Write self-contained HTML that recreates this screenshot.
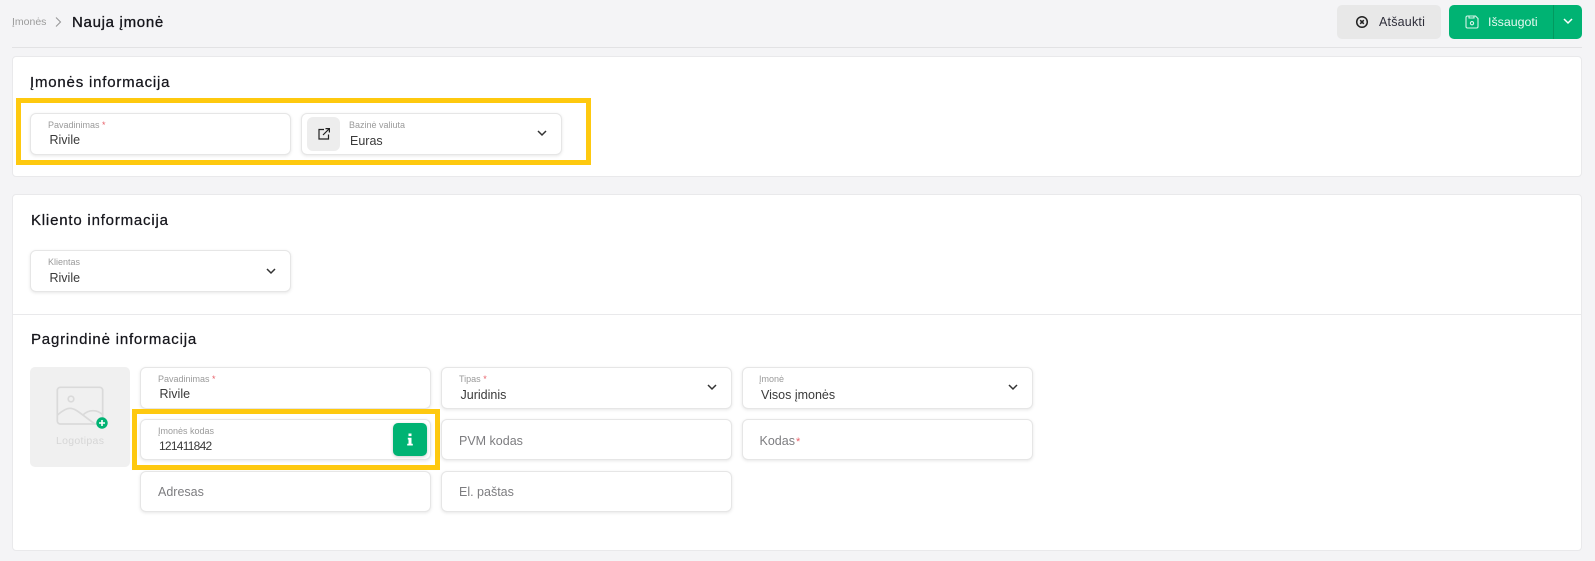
<!DOCTYPE html>
<html lang="lt">
<head>
<meta charset="utf-8">
<title>Nauja įmonė</title>
<style>
html,body{margin:0;padding:0}
body{width:1595px;height:561px;position:relative;overflow:hidden;background:#f4f4f6;font-family:"Liberation Sans",sans-serif;color:#333}
div,span,svg{position:absolute;box-sizing:border-box}
.t{white-space:nowrap;line-height:20px;height:20px}
.card{background:#fff;border:1px solid #e9e9eb;border-radius:4px}
.f{background:#fff;border:1px solid #e6e6e6;border-radius:6px;box-shadow:0 1px 3px rgba(0,0,0,.10);width:291px;height:42px}
.h{font-size:15px;color:#16161c;letter-spacing:.8px;-webkit-text-stroke:.25px #16161c}
.l{font-size:9px;color:#9a9a9a;letter-spacing:0}
.v{font-size:12.5px;color:#3a3a3a}
.p{font-size:12.5px;color:#7d7d80}
.r{color:#e8616a}
.y{border:5px solid #fec90f}
</style>
</head>
<body>
<!-- header -->
<div class="t" style="left:12px;top:12px;font-size:10.5px;color:#9b9b9b">Įmonės</div>
<svg style="left:54px;top:16px" width="9" height="12" viewBox="0 0 9 12" fill="none" stroke="#999" stroke-width="1.100"><path d="M2 1.500L6.500 6L2 10.500"/></svg>
<div class="t" style="left:72px;top:13px;font-size:15px;color:#16161c;letter-spacing:.7px;-webkit-text-stroke:.35px #16161c">Nauja įmonė</div>
<div style="left:12px;top:47px;width:1570px;height:1px;background:#e2e2e4"></div>

<div style="left:1337px;top:5px;width:104px;height:34px;background:#e8e8e8;border-radius:5px"></div>
<svg style="left:1355px;top:15px" width="14" height="14" viewBox="0 0 14 14" fill="none" stroke="#222" stroke-width="1.500"><circle cx="7" cy="7" r="5.300"/><path d="M5.200 5.200L8.800 8.800M8.800 5.200L5.200 8.800"/></svg>
<div class="t" style="left:1379px;top:12px;font-size:12.5px;color:#2e2e3a;letter-spacing:.2px">Atšaukti</div>

<div style="left:1449px;top:5px;width:133px;height:34px;background:#00b373;border-radius:5px"></div>
<div style="left:1553px;top:5px;width:1px;height:34px;background:#02995f"></div>
<svg style="left:1465px;top:15px" width="14" height="14" viewBox="0 0 14 14" fill="none" stroke="#d8f5e9" stroke-width="1.100"><path d="M2.500 1H10.500L13 3.500V11.500A1.500 1.500 0 0 1 11.500 13H2.500A1.500 1.500 0 0 1 1 11.500V2.500A1.500 1.500 0 0 1 2.500 1Z"/><path d="M4 1V3H9V1"/><circle cx="7" cy="8.200" r="1.600"/></svg>
<div class="t" style="left:1488px;top:12px;font-size:12.4px;color:#e6f9f1;letter-spacing:0">Išsaugoti</div>
<svg style="left:1562px;top:17px" width="12" height="8" viewBox="0 0 12 8" fill="none" stroke="#fff" stroke-width="1.500"><path d="M2 2L6 6L10 2"/></svg>

<!-- card 1 -->
<div class="card" style="left:12px;top:56px;width:1570px;height:121px"></div>
<div class="t h" style="left:30px;top:73px">Įmonės informacija</div>
<div class="y" style="left:16px;top:98px;width:575px;height:67px"></div>
<div class="f" style="left:30px;top:113px;width:261px"></div>
<div class="t l" style="left:48px;top:115px">Pavadinimas <span class="r" style="position:static">*</span></div>
<div class="t v" style="left:49.500px;top:130px">Rivile</div>
<div class="f" style="left:301px;top:113px;width:261px"></div>
<div style="left:307px;top:117px;width:33px;height:34px;background:#ededed;border-radius:6px"></div>
<svg style="left:317px;top:127px" width="14" height="14" viewBox="0 0 14 14" fill="none" stroke="#222" stroke-width="1.200"><path d="M7 2.500H2V12H11.500V7.500"/><path d="M6 8L12 2M8.500 1.600H12.400V5.500"/></svg>
<div class="t l" style="left:349px;top:115px">Bazinė valiuta</div>
<div class="t v" style="left:350px;top:131px">Euras</div>
<svg style="left:536px;top:129px" width="12" height="8" viewBox="0 0 12 8" fill="none" stroke="#333" stroke-width="1.500"><path d="M2 2L6 6L10 2"/></svg>

<!-- card 2 -->
<div class="card" style="left:12px;top:194px;width:1570px;height:357px"></div>
<div class="t h" style="left:31px;top:211px">Kliento informacija</div>
<div class="f" style="left:30px;top:250px;width:261px"></div>
<div class="t l" style="left:48px;top:252px">Klientas</div>
<div class="t v" style="left:49.500px;top:268px">Rivile</div>
<svg style="left:265px;top:267px" width="12" height="8" viewBox="0 0 12 8" fill="none" stroke="#333" stroke-width="1.500"><path d="M2 2L6 6L10 2"/></svg>
<div style="left:13px;top:314px;width:1568px;height:1px;background:#e9e9eb"></div>
<div class="t h" style="left:31px;top:330px">Pagrindinė informacija</div>

<!-- logo -->
<div style="left:30px;top:367px;width:100px;height:100px;background:#f0f0f0;border-radius:5px"></div>
<svg style="left:56px;top:386px" width="54" height="44" viewBox="0 0 54 44" fill="none" stroke="#dadada" stroke-width="1.700"><rect x="1.300" y="1.300" width="45.400" height="36.700" rx="3"/><circle cx="15" cy="13" r="2.800"/><path d="M1.500 29C6 25 10 22.300 14 22.300C20 22.300 26 29 39 38"/><path d="M27 29C30 26 33 24.700 37 24.700C41 24.700 44 26 46.700 29"/></svg>
<svg style="left:96px;top:417px" width="12" height="12" viewBox="0 0 12 12"><circle cx="6" cy="6" r="5.700" fill="#00b373"/><path d="M6 3V9M3 6H9" stroke="#fff" stroke-width="1.600"/></svg>
<div class="t" style="left:56px;top:431px;font-size:10.500px;color:#d6d6d6;letter-spacing:.3px">Logotipas</div>

<!-- row 1 -->
<div class="f" style="left:140px;top:367px"></div>
<div class="t l" style="left:158px;top:369px">Pavadinimas <span class="r" style="position:static">*</span></div>
<div class="t v" style="left:159.500px;top:384px">Rivile</div>
<div class="f" style="left:441px;top:367px"></div>
<div class="t l" style="left:459px;top:369px">Tipas <span class="r" style="position:static">*</span></div>
<div class="t v" style="left:460.500px;top:385px">Juridinis</div>
<svg style="left:706px;top:383px" width="12" height="8" viewBox="0 0 12 8" fill="none" stroke="#333" stroke-width="1.500"><path d="M2 2L6 6L10 2"/></svg>
<div class="f" style="left:742px;top:367px"></div>
<div class="t l" style="left:759px;top:369px">Įmonė</div>
<div class="t v" style="left:761px;top:385px">Visos įmonės</div>
<svg style="left:1007px;top:383px" width="12" height="8" viewBox="0 0 12 8" fill="none" stroke="#333" stroke-width="1.500"><path d="M2 2L6 6L10 2"/></svg>

<!-- row 2 -->
<div class="f" style="left:140px;top:419px;height:41px"></div>
<div class="t l" style="left:158px;top:421px">Įmonės kodas</div>
<div class="t v" style="left:159px;top:436px;letter-spacing:-.75px;font-size:12px">121411842</div>
<div style="left:393px;top:423px;width:34px;height:33px;background:#00b373;border-radius:5px;box-shadow:0 1px 3px rgba(0,0,0,.2)"></div>
<svg style="left:405px;top:433px" width="10" height="13" viewBox="0 0 10 13" fill="#fff"><rect x="3.500" y="0.500" width="3" height="2.600"/><path d="M2.800 4.800H6.500V10.800H7.800V12.500H2.200V10.800H3.500V6.500H2.800Z"/></svg>
<div class="y" style="left:132px;top:409px;width:308px;height:61px"></div>
<div class="f" style="left:441px;top:419px;height:41px"></div>
<div class="t p" style="left:459px;top:431px">PVM kodas</div>
<div class="f" style="left:742px;top:419px;height:41px"></div>
<div class="t p" style="left:759.500px;top:431px">Kodas<span class="r" style="position:static;font-size:11px;margin-left:1px">*</span></div>

<!-- row 3 -->
<div class="f" style="left:140px;top:471px;height:41px"></div>
<div class="t p" style="left:158px;top:482px">Adresas</div>
<div class="f" style="left:441px;top:471px;height:41px"></div>
<div class="t p" style="left:459px;top:482px">El. paštas</div>
</body>
</html>
